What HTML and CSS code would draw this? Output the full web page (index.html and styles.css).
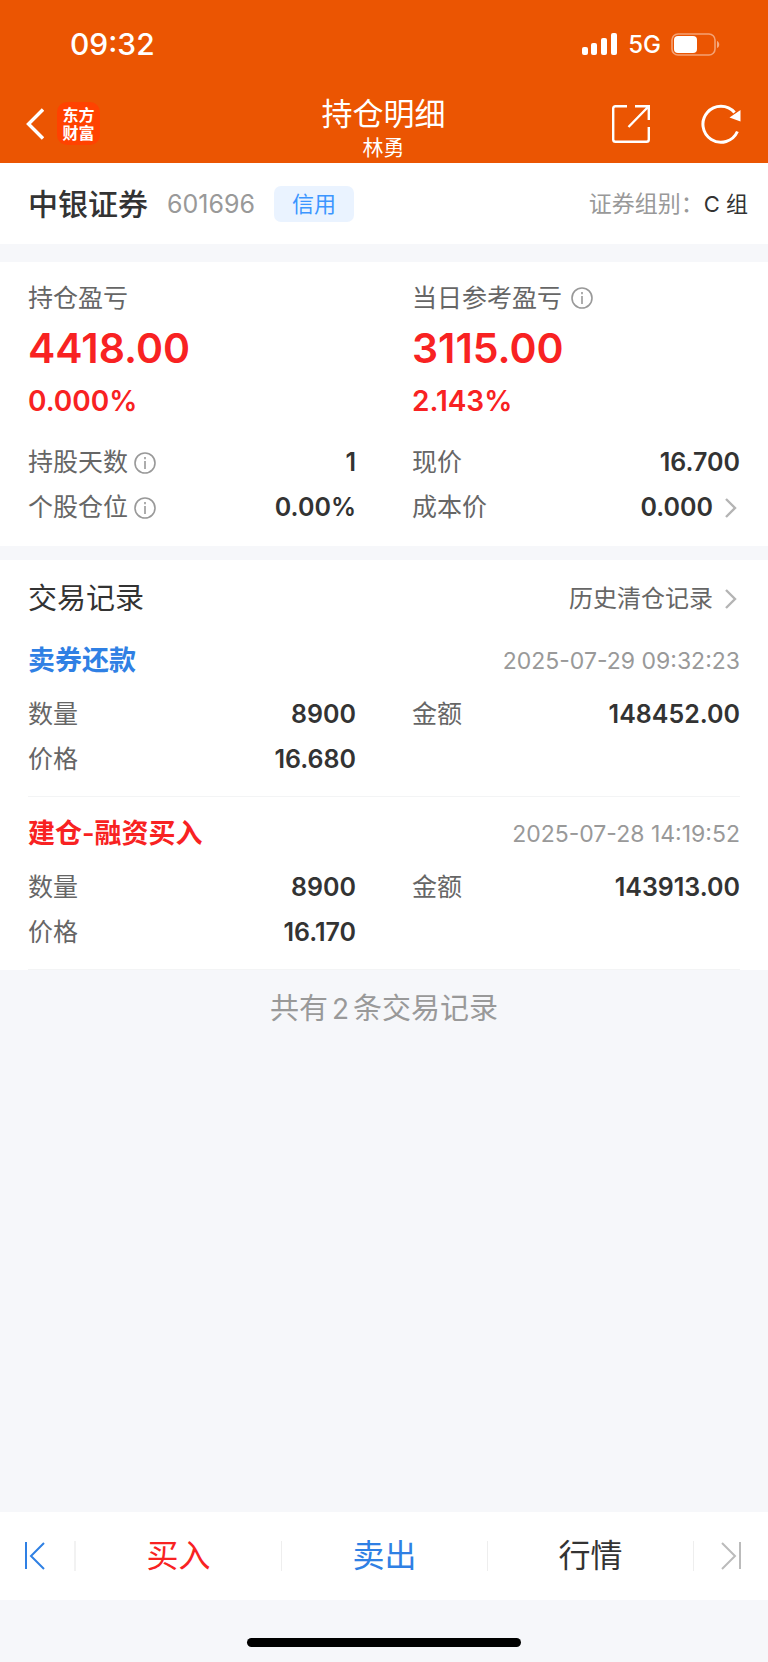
FILE: index.html
```
<!DOCTYPE html>
<html lang="zh-CN">
<head>
    <meta charset="UTF-8">
    <meta name="viewport" content="width=device-width, initial-scale=1">
    <title>持仓明细</title>
    <link rel="stylesheet" href="styles.css">
</head>
<body>
    <header class="header">
        <div class="status-bar">
            <span class="time">09:32</span>
            <div class="status-icons">
                <svg class="signal" width="36" height="22" viewBox="0 0 36 22" fill="#fff">
                    <rect x="0" y="14" width="6" height="8" rx="2"/>
                    <rect x="9" y="10" width="6" height="12" rx="2"/>
                    <rect x="19" y="5" width="6" height="17" rx="2"/>
                    <rect x="29" y="0" width="6" height="22" rx="2"/>
                </svg>
                <span class="network">5G</span>
                <svg class="battery" width="49" height="23" viewBox="0 0 49 23">
                    <rect x="1" y="1" width="43" height="21" rx="6" fill="none" stroke="#fff" stroke-opacity="0.45" stroke-width="1.6"/>
                    <rect x="3" y="3" width="23" height="17" rx="4" fill="#fff"/>
                    <path d="M46 8c3 1 3 6 0 7z" fill="#fff" fill-opacity="0.5"/>
                </svg>
            </div>
        </div>
        <div class="nav-bar">
            <div class="nav-left">
                <button type="button" class="icon-button" aria-label="返回">
                    <svg width="18" height="32" viewBox="0 0 18 32" fill="none" stroke="#fff" stroke-width="3.4">
                        <path d="M17 1.5L2.5 16L17 30.5"/>
                    </svg>
                </button>
                <a href="#" class="logo"><span>东方</span><span>财富</span></a>
            </div>
            <div class="nav-title">
                <h1>持仓明细</h1>
                <p>林勇</p>
            </div>
            <div class="nav-right">
                <button type="button" class="icon-button" aria-label="分享">
                    <svg width="40" height="40" viewBox="0 0 40 40" fill="none" stroke="#fff" stroke-width="2.4">
                        <path d="M16 2.2H4.5Q2.2 2.2 2.2 4.5V35.5Q2.2 37.8 4.5 37.8H35.5Q37.8 37.8 37.8 35.5V23"/>
                        <path d="M24 2.2H37.8V16M37 3L17.5 23"/>
                    </svg>
                </button>
                <button type="button" class="icon-button" aria-label="刷新">
                    <svg width="40" height="40" viewBox="0 0 40 40" fill="none" stroke="#fff" stroke-width="3">
                        <path d="M36.4 27.5A18 18 0 1 1 33.6 8.5"/>
                        <path d="M39.5 6V17.5L28.5 13.5Z" fill="#fff" stroke="none"/>
                    </svg>
                </button>
            </div>
        </div>
    </header>

    <main class="content">
        <section class="stock">
            <h2>中银证券</h2>
            <span class="stock-code">601696</span>
            <span class="stock-tag">信用</span>
            <div class="stock-group">证券组别：<b>C 组</b></div>
        </section>

        <section class="summary">
            <div class="columns">
                <div class="profit">
                    <div class="label">持仓盈亏</div>
                    <div class="amount">4418.00</div>
                    <div class="percent">0.000%</div>
                </div>
                <div class="profit">
                    <div class="label">当日参考盈亏
                        <svg class="info" viewBox="0 0 22 22"><circle cx="11" cy="11" r="10"/><path d="M11 9V17M11 5V7.2"/></svg>
                    </div>
                    <div class="amount">3115.00</div>
                    <div class="percent">2.143%</div>
                </div>
            </div>
            <div class="columns details">
                <div class="row">
                    <span class="label">持股天数
                        <svg class="info" viewBox="0 0 22 22"><circle cx="11" cy="11" r="10"/><path d="M11 9V17M11 5V7.2"/></svg>
                    </span>
                    <span class="value">1</span>
                </div>
                <div class="row">
                    <span class="label">现价</span>
                    <span class="value">16.700</span>
                </div>
                <div class="row">
                    <span class="label">个股仓位
                        <svg class="info" viewBox="0 0 22 22"><circle cx="11" cy="11" r="10"/><path d="M11 9V17M11 5V7.2"/></svg>
                    </span>
                    <span class="value">0.00%</span>
                </div>
                <a href="#" class="row">
                    <span class="label">成本价</span>
                    <span class="value">0.000
                        <svg class="arrow" viewBox="0 0 12 20"><path d="M1 1L10 10L1 19"/></svg>
                    </span>
                </a>
            </div>
        </section>

        <section class="records">
            <div class="records-header">
                <h2>交易记录</h2>
                <a href="#">历史清仓记录
                    <svg class="arrow" viewBox="0 0 12 20"><path d="M1 1L10 10L1 19"/></svg>
                </a>
            </div>

            <article class="record">
                <div class="record-header">
                    <h3 class="sell">卖券还款</h3>
                    <time>2025-07-29 09:32:23</time>
                </div>
                <div class="columns">
                    <div class="row">
                        <span class="label">数量</span>
                        <span class="value">8900</span>
                    </div>
                    <div class="row">
                        <span class="label">金额</span>
                        <span class="value">148452.00</span>
                    </div>
                    <div class="row">
                        <span class="label">价格</span>
                        <span class="value">16.680</span>
                    </div>
                </div>
            </article>

            <article class="record">
                <div class="record-header">
                    <h3 class="buy">建仓-融资买入</h3>
                    <time>2025-07-28 14:19:52</time>
                </div>
                <div class="columns">
                    <div class="row">
                        <span class="label">数量</span>
                        <span class="value">8900</span>
                    </div>
                    <div class="row">
                        <span class="label">金额</span>
                        <span class="value">143913.00</span>
                    </div>
                    <div class="row">
                        <span class="label">价格</span>
                        <span class="value">16.170</span>
                    </div>
                </div>
            </article>
        </section>

        <p class="total">共有<span class="total-count">2</span>条交易记录</p>
    </main>

    <footer class="footer">
        <nav class="tabs">
            <button type="button" class="tab-step" aria-label="上一个">
                <svg width="22" height="30" viewBox="0 0 22 30" fill="none" stroke="#2f80e4" stroke-width="2">
                    <path d="M2 1V28M20 2L7 15L20 28"/>
                </svg>
            </button>
            <button type="button" class="tab buy">买入</button>
            <button type="button" class="tab sell">卖出</button>
            <button type="button" class="tab">行情</button>
            <button type="button" class="tab-step" aria-label="下一个">
                <svg width="22" height="30" viewBox="0 0 22 30" fill="none" stroke="#bbb" stroke-width="2">
                    <path d="M20 1V28M2 2L15 15L2 28"/>
                </svg>
            </button>
        </nav>
        <div class="home-area">
            <div class="home-indicator"></div>
        </div>
    </footer>
</body>
</html>
```

FILE: styles.css
```
* {
    box-sizing: border-box;
}
body {
    margin: 0;
    min-height: 100vh;
    display: flex;
    flex-direction: column;
    font-family: Inter, "Noto Sans CJK SC", sans-serif;
    font-size: 25px;
    color: #333;
    background-color: #f6f7fa;
}
h1, h2, h3, p {
    margin: 0;
    font-weight: 400;
}
a {
    color: inherit;
    text-decoration: none;
}
button {
    padding: 0;
    border: none;
    background: none;
    font-family: inherit;
    color: inherit;
    cursor: pointer;
}
svg {
    display: block;
    flex: none;
}

/* Header */
.header {
    background-color: #eb5502;
    color: #fff;
}
.status-bar {
    display: flex;
    justify-content: space-between;
    align-items: center;
    height: 84px;
    padding: 4px 48px 0 70px;
}
.time {
    font-size: 30px;
    font-weight: 500;
}
.status-icons {
    display: flex;
    align-items: center;
    gap: 10px;
}
.network {
    font-size: 24px;
    font-weight: 500;
}
.nav-bar {
    display: grid;
    grid-template-columns: 1fr auto 1fr;
    align-items: center;
    height: 79px;
    padding: 0 27px 0 26px;
}
.nav-left {
    display: flex;
    align-items: center;
    gap: 13px;
}
.logo {
    display: flex;
    flex-direction: column;
    justify-content: center;
    align-items: center;
    width: 43px;
    height: 43px;
    border-radius: 10px;
    background-color: #ff4200;
    font-size: 16px;
    font-weight: 700;
    line-height: 18px;
}
.nav-title {
    padding-top: 9px;
    text-align: center;
}
.nav-title h1 {
    font-size: 31px;
    line-height: 40px;
}
.nav-title p {
    font-size: 21px;
    line-height: 28px;
}
.nav-right {
    display: flex;
    justify-content: flex-end;
    gap: 50px;
}

/* Stock name */
.content {
    flex: 1;
}
.stock {
    display: flex;
    align-items: center;
    height: 81px;
    padding: 0 20px 0 28px;
    line-height: 36px;
    background-color: #fff;
}
.stock h2 {
    font-size: 30px;
    font-weight: 500;
}
.stock-code {
    margin-left: 19px;
    font-size: 25px;
    color: #999;
}
.stock-tag {
    margin-left: 19px;
    padding: 0 18px;
    border-radius: 7px;
    background-color: #eaf3ff;
    color: #3c96ff;
    font-size: 22px;
}
.stock-group {
    margin-left: auto;
    font-size: 23px;
    color: #999;
}
.stock-group b {
    font-size: 22px;
    font-weight: 400;
    color: #333;
}

/* Profit summary */
.summary {
    margin-top: 18px;
    padding: 18px 28px 16px;
    background-color: #fff;
}
.columns {
    display: grid;
    grid-template-columns: 1fr 1fr;
    column-gap: 56px;
}
.label {
    display: flex;
    align-items: center;
    gap: 6px;
    color: #666;
}
.profit .label {
    gap: 9px;
    line-height: 36px;
}
.amount {
    font-size: 41px;
    font-weight: 600;
    line-height: 64px;
    color: #f82222;
}
.percent {
    font-size: 28px;
    font-weight: 600;
    line-height: 42px;
    color: #f82222;
}
.details {
    margin-top: 18px;
}
.row {
    display: flex;
    justify-content: space-between;
    align-items: center;
    line-height: 45px;
}
.value {
    display: flex;
    align-items: center;
    gap: 12px;
    font-weight: 600;
}
.info {
    width: 22px;
    height: 22px;
    fill: none;
    stroke: #999;
    stroke-width: 1.6;
}
.arrow {
    width: 12px;
    height: 20px;
    margin-right: 3px;
    fill: none;
    stroke: #b4b4b4;
    stroke-width: 2.4;
}

/* Trade records */
.records {
    margin-top: 14px;
    padding: 14px 28px 0;
    background-color: #fff;
}
.records-header {
    display: flex;
    justify-content: space-between;
    line-height: 50px;
}
.records-header h2 {
    font-size: 29px;
}
.records-header a {
    display: flex;
    align-items: center;
    gap: 12px;
    font-size: 24px;
    color: #666;
}
.record {
    padding: 12px 0 14px;
    border-bottom: 1px solid #f3f4f5;
}
.record-header {
    display: flex;
    justify-content: space-between;
    margin-bottom: 6px;
    line-height: 50px;
}
.record-header h3 {
    font-size: 27px;
    font-weight: 600;
}
.record-header time {
    font-size: 23px;
    color: #999;
}
.buy {
    color: #f82222;
}
.sell {
    color: #2f80e4;
}
.total {
    padding: 16px 0;
    font-size: 29px;
    line-height: 46px;
    text-align: center;
    color: #999;
}
.total-count {
    margin: 0 4px;
    font-size: 28px;
}

/* Bottom tabs */
.tabs {
    display: flex;
    align-items: center;
    height: 88px;
    background-color: #fff;
}
.tab, .tab-step {
    display: flex;
    justify-content: center;
    align-items: center;
    height: 30px;
}
.tab {
    flex: 1;
    border-right: 1px solid #eee;
    font-size: 32px;
    line-height: 30px;
}
.tab-step {
    width: 74px;
}
.tab-step:first-child {
    width: 76px;
    padding-right: 4px;
    border-right: 2px solid #f2f2f2;
}
.home-area {
    display: flex;
    justify-content: center;
    height: 62px;
    padding-top: 38px;
}
.home-indicator {
    width: 274px;
    height: 9px;
    border-radius: 5px;
    background-color: #000;
}
```
